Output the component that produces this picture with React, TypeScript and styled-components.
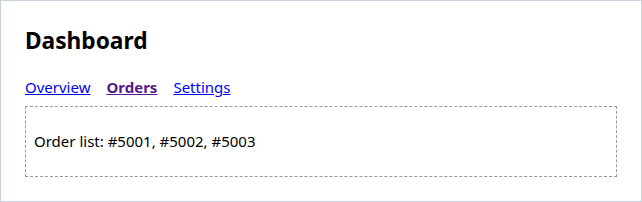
import React from 'react';
import styled, { createGlobalStyle } from 'styled-components';

const GlobalStyle = createGlobalStyle`
  html, body {
    margin: 0;
    padding: 0;
    background: #ffffff;
  }
  body {
    font-family: 'Noto Sans', 'Open Sans', sans-serif;
    color: #000000;
  }
`;

const Frame = styled.div`
  box-sizing: border-box;
  width: 642px;
  height: 202px;
  border: 1px solid #c9d1da;
  padding: 24px;
  display: flex;
  flex-direction: column;
`;

const Title = styled.h1`
  margin: 0 0 20px;
  font-size: 22.7px;
  line-height: 32px;
  font-weight: 700;
`;

const Nav = styled.nav`
  display: flex;
  gap: 16px;
  margin-bottom: 8px;
  font-size: 15px;
  line-height: 21px;
`;

const NavLink = styled.a<{ $active?: boolean }>`
  color: ${(p) => (p.$active ? '#551a8b' : '#0000ee')};
  font-weight: ${(p) => (p.$active ? 700 : 400)};
  text-decoration: underline;
  cursor: pointer;
`;

const Panel = styled.section`
  border: 1px dashed #999999;
  padding: 8px;
`;

const PanelText = styled.p`
  margin: 16px 0;
  font-size: 15px;
  line-height: 21px;
`;

const tabs = [
  { id: 'overview', label: 'Overview' },
  { id: 'orders', label: 'Orders' },
  { id: 'settings', label: 'Settings' },
];

const App = () => {
  const active = 'orders';
  return (
    <>
      <GlobalStyle />
      <Frame>
        <Title>Dashboard</Title>
        <Nav>
          {tabs.map((t) => (
            <NavLink key={t.id} href={`#${t.id}`} $active={t.id === active}>
              {t.label}
            </NavLink>
          ))}
        </Nav>
        <Panel>
          <PanelText>Order list: #5001, #5002, #5003</PanelText>
        </Panel>
      </Frame>
    </>
  );
};

export default App;
